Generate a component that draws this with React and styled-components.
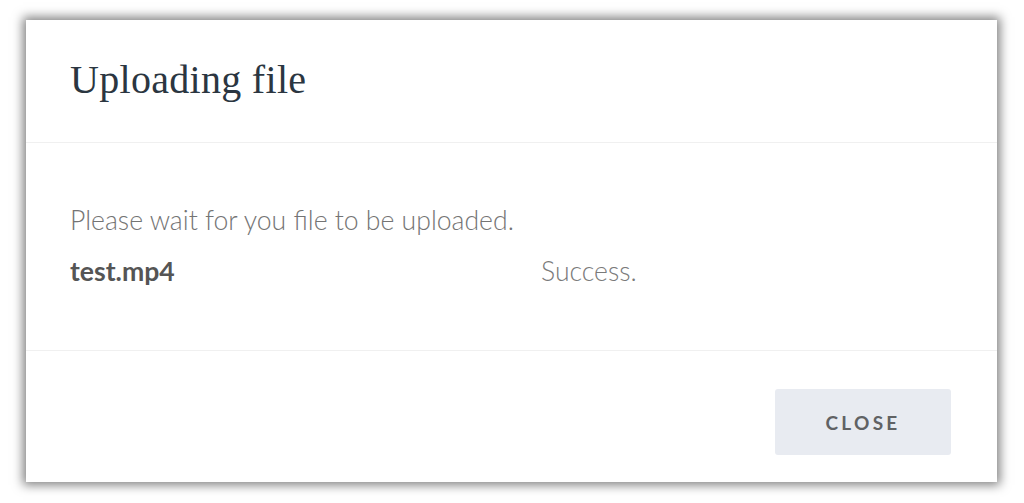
import React from "react";
import styled, { createGlobalStyle } from "styled-components";

const Global = createGlobalStyle`
  html, body { margin: 0; padding: 0; background: #ffffff; }
  body { font-family: "Lato", "Liberation Sans", sans-serif; }
`;

const Page = styled.div`
  width: 1024px;
  height: 503px;
  box-sizing: border-box;
  padding: 20px 27px 21px 26px;
  background: #ffffff;
  overflow: hidden;
`;

const Modal = styled.div`
  width: 971px;
  height: 462px;
  box-sizing: border-box;
  background: #ffffff;
  box-shadow: 0 0 10px 3px rgba(0, 0, 0, 0.5);
  display: flex;
  flex-direction: column;
`;

const Header = styled.div`
  height: 123px;
  box-sizing: border-box;
  padding: 0 44px;
  display: flex;
  align-items: center;
  border-bottom: 1px solid #f0f0f0;
`;

const Title = styled.h1`
  margin: 0;
  padding-bottom: 4px;
  font-family: "Liberation Serif", serif;
  font-weight: 400;
  font-size: 40px;
  color: #2b3641;
  letter-spacing: 0.3px;
`;

const Body = styled.div`
  height: 208px;
  box-sizing: border-box;
  padding: 62px 44px 0;
  border-bottom: 1px solid #f0f0f0;
`;

const Message = styled.p`
  margin: 0;
  font-family: "Lato", sans-serif;
  font-weight: 300;
  font-size: 26.6px;
  line-height: 30px;
  color: #747474;
`;

const FileRow = styled.div`
  display: flex;
  margin-top: 21px;
  line-height: 30px;
  font-size: 26.6px;
`;

const FileName = styled.span`
  width: 471px;
  font-family: "Lato", sans-serif;
  font-weight: 700;
  color: #555555;
`;

const Status = styled.span`
  font-family: "Lato", sans-serif;
  font-weight: 300;
  color: #7a7a7a;
`;

const Footer = styled.div`
  flex: 1;
  display: flex;
  justify-content: flex-end;
  align-items: flex-start;
  padding: 38px 46px 0;
`;

const Button = styled.button`
  width: 176px;
  height: 66px;
  padding: 0;
  border: none;
  border-radius: 3px;
  background: #e8ebf1;
  font-family: "Lato", sans-serif;
  font-weight: 700;
  font-size: 19px;
  letter-spacing: 3.3px;
  color: #606264;
  cursor: pointer;
`;

export default function App() {
  return (
    <>
      <Global />
      <Page>
        <Modal>
          <Header>
            <Title>Uploading file</Title>
          </Header>
          <Body>
            <Message>Please wait for you file to be uploaded.</Message>
            <FileRow>
              <FileName>test.mp4</FileName>
              <Status>Success.</Status>
            </FileRow>
          </Body>
          <Footer>
            <Button>CLOSE</Button>
          </Footer>
        </Modal>
      </Page>
    </>
  );
}
